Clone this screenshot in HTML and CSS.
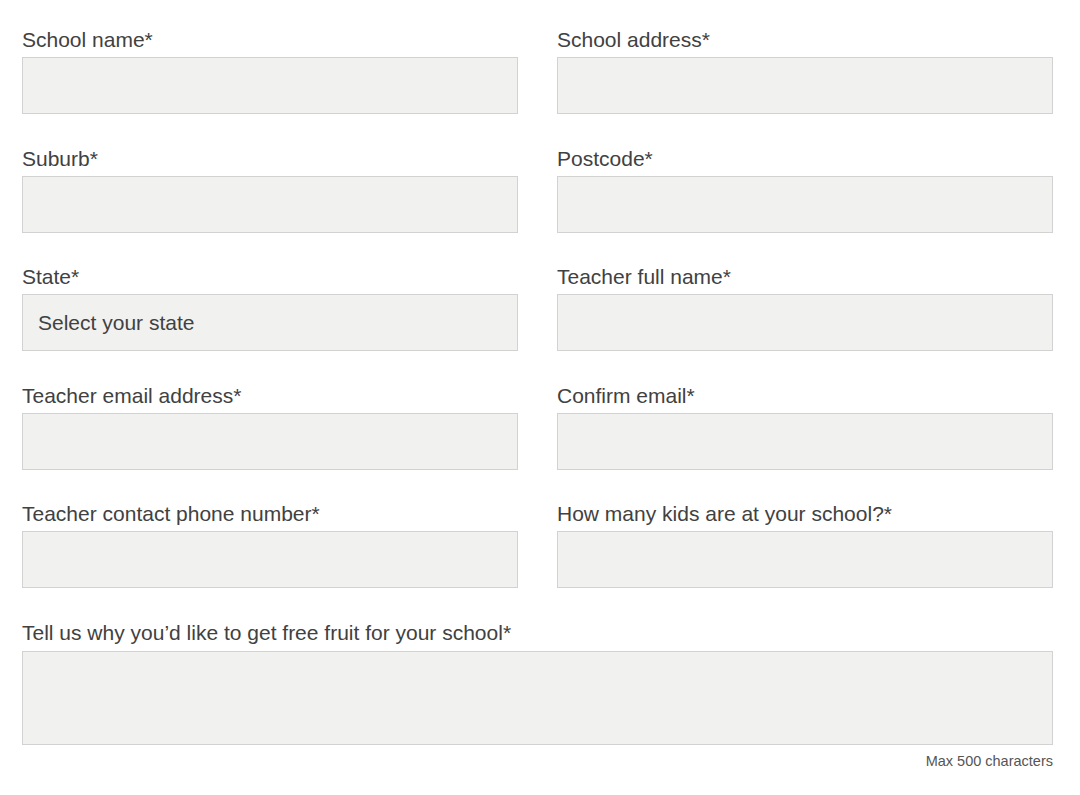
FILE: index.html
```html
<!DOCTYPE html>
<html lang="en">
<head>
  <meta charset="UTF-8">
  <title>Free fruit for schools</title>
  <link rel="stylesheet" href="styles.css">
</head>
<body>
  <form class="school-form">
    <div class="grid">
      <div class="field">
        <label for="school-name">School name*</label>
        <input type="text" id="school-name">
      </div>
      <div class="field">
        <label for="school-address">School address*</label>
        <input type="text" id="school-address">
      </div>
      <div class="field">
        <label for="suburb">Suburb*</label>
        <input type="text" id="suburb">
      </div>
      <div class="field">
        <label for="postcode">Postcode*</label>
        <input type="text" id="postcode">
      </div>
      <div class="field">
        <label for="state">State*</label>
        <select id="state">
          <option>Select your state</option>
        </select>
      </div>
      <div class="field">
        <label for="teacher-name">Teacher full name*</label>
        <input type="text" id="teacher-name">
      </div>
      <div class="field">
        <label for="teacher-email">Teacher email address*</label>
        <input type="email" id="teacher-email">
      </div>
      <div class="field">
        <label for="confirm-email">Confirm email*</label>
        <input type="email" id="confirm-email">
      </div>
      <div class="field">
        <label for="phone">Teacher contact phone number*</label>
        <input type="tel" id="phone">
      </div>
      <div class="field">
        <label for="kids">How many kids are at your school?*</label>
        <input type="text" id="kids">
      </div>
    </div>
    <div class="field wide">
      <label for="reason">Tell us why you’d like to get free fruit for your school*</label>
      <textarea id="reason" maxlength="500"></textarea>
      <div class="hint">Max 500 characters</div>
    </div>
  </form>
</body>
</html>
```

FILE: styles.css
```css
body {
  margin: 0;
  background-color: #fff;
  font-family: "Liberation Sans", Arial, sans-serif;
  color: #414141;
}
.school-form {
  padding: 28px 27px 0 22px;
}
.grid {
  display: grid;
  grid-template-columns: 1fr 1fr;
  column-gap: 39px;
  row-gap: 32.5px;
}
.field {
  display: flex;
  flex-direction: column;
}
.field label {
  font-size: 21px;
  line-height: 24px;
  margin-bottom: 5px;
}
.field input,
.field select,
.field textarea {
  box-sizing: border-box;
  width: 100%;
  height: 57px;
  margin: 0;
  padding: 0 15px;
  border: 1px solid #d2d2d2;
  border-radius: 0;
  background-color: #f1f1f0;
  font-family: inherit;
  font-size: 21px;
  color: #414141;
  appearance: none;
  -webkit-appearance: none;
  outline: none;
}
.wide {
  margin-top: 32.5px;
}
.wide label {
  margin-bottom: 6px;
}
.field textarea {
  height: 94px;
  padding: 12px 15px;
  resize: none;
}
.hint {
  margin-top: 8px;
  text-align: right;
  font-size: 14.5px;
  line-height: 16px;
  color: #555;
}
```
